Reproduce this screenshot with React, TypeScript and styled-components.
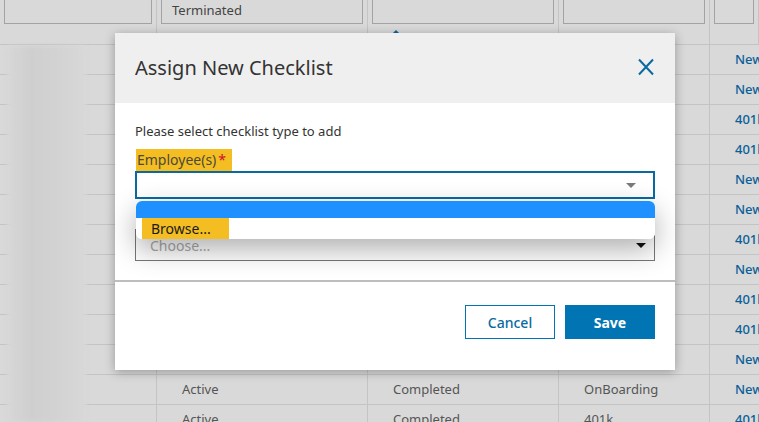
import React from "react";
import styled, { createGlobalStyle } from "styled-components";

const GlobalStyle = createGlobalStyle`
  html, body { margin: 0; padding: 0; }
  body {
    font-family: "Noto Sans", "Open Sans", Arial, sans-serif;
    background: #d9d9d9;
    overflow: hidden;
  }
  * { box-sizing: border-box; }
`;

const Page = styled.div`
  position: relative;
  width: 759px;
  height: 422px;
  overflow: hidden;
  background: #d9d9d9;
`;

const Grid = styled.div`
  display: grid;
  grid-template-columns: 157px 211px 191px 151px 1fr;
  grid-auto-rows: 30px;
  grid-template-rows: 45px;
`;

const HeadCell = styled.div`
  border-right: 1px solid #c4c4c4;
  border-bottom: 1px solid #c4c4c4;
  padding: 0 4px;
  position: relative;
  &:last-child { border-right: none; }
`;

const FilterBox = styled.div`
  height: 24px;
  border: 1px solid #a3a3a3;
  border-top: none;
  padding: 0 10px 4px 10px;
  font-size: 13px;
  line-height: 18px;
  color: #444;
  display: flex;
  align-items: center;
`;

const SortMark = styled.span`
  position: absolute;
  left: 24px;
  bottom: 10px;
  width: 0;
  height: 0;
  border-left: 4px solid transparent;
  border-right: 4px solid transparent;
  border-bottom: 4px solid #0a65a0;
`;

const Cell = styled.div<{ $link?: boolean }>`
  border-right: 1px solid #c4c4c4;
  border-bottom: 1px solid #c4c4c4;
  padding: 0 0 2px 25px;
  display: flex;
  align-items: center;
  font-size: 13px;
  white-space: nowrap;
  overflow: hidden;
  color: ${(p) => (p.$link ? "#0b5f98" : "#555")};
  font-weight: ${(p) => (p.$link ? 500 : 400)};
  &:nth-child(5n) { border-right: none; }
`;

const Redaction = styled.div`
  position: absolute;
  left: 7px;
  top: 46px;
  width: 79px;
  bottom: 0;
  background: linear-gradient(90deg, #d7d7d7 0%, #cfcfcf 30%, #d2d2d2 60%, #d8d8d8 100%);
  filter: blur(2px);
`;

const Modal = styled.div`
  position: absolute;
  left: 115px;
  top: 33px;
  width: 560px;
  height: 337px;
  background: #fff;
  box-shadow: 0 2px 10px rgba(0, 0, 0, 0.3);
  display: flex;
  flex-direction: column;
`;

const ModalHeader = styled.div`
  height: 70px;
  background: #efefef;
  padding: 0 20px 2px 20px;
  display: flex;
  align-items: center;
  justify-content: space-between;
`;

const Title = styled.h2`
  margin: 0;
  font-size: 20px;
  font-weight: 400;
  color: #333;
`;

const CloseButton = styled.button`
  border: none;
  background: none;
  padding: 0;
  width: 18px;
  height: 18px;
  display: flex;
  cursor: pointer;
`;

const ModalBody = styled.div`
  position: relative;
  padding: 19px 20px 0 20px;
  height: 177px;
  display: flex;
  flex-direction: column;
`;

const Intro = styled.p`
  margin: 0;
  font-size: 13px;
  line-height: 18px;
  color: #333;
`;

const Label = styled.label`
  align-self: flex-start;
  margin-top: 9px;
  margin-left: 1px;
  height: 22px;
  padding: 0 6px 0 1px;
  font-size: 14px;
  line-height: 21px;
  color: #4a4a3a;
  background: #f4be22;
`;

const Required = styled.span`
  color: #c8102e;
  margin-left: 2px;
`;

const Select = styled.div<{ $focused?: boolean }>`
  height: ${(p) => (p.$focused ? "28px" : "32px")};
  margin-top: ${(p) => (p.$focused ? "0" : "30px")};
  border: ${(p) => (p.$focused ? "2px solid #0a6aa0" : "1px solid #777")};
  background: #fff;
  display: flex;
  align-items: center;
  justify-content: space-between;
  padding: 0 8px 0 14px;
  font-size: 14px;
  color: #aaa;
`;

const Caret = styled.span<{ $dark?: boolean }>`
  width: 0;
  height: 0;
  border-left: 5px solid transparent;
  border-right: 5px solid transparent;
  border-top: 5px solid ${(p) => (p.$dark ? "#111" : "#7a7a7a")};
  margin-right: ${(p) => (p.$dark ? "0px" : "9px")};
`;

const Dropdown = styled.ul`
  position: absolute;
  left: 21px;
  top: 98px;
  width: 519px;
  margin: 0;
  padding: 0;
  list-style: none;
  background: #fff;
  border-radius: 6px;
  overflow: hidden;
  box-shadow: 0 10px 28px rgba(0, 0, 0, 0.32);
`;

const Option = styled.li<{ $active?: boolean }>`
  height: ${(p) => (p.$active ? "17px" : "21px")};
  background: ${(p) => (p.$active ? "#1e90ff" : "#fff")};
  padding-left: 6px;
  display: flex;
  align-items: stretch;
`;

const OptionText = styled.span`
  background: #f4be22;
  padding: 0 18px 0 9px;
  font-size: 14px;
  line-height: 21px;
  color: #1a1a1a;
`;

const ModalFooter = styled.div`
  flex: 1;
  border-top: 2px solid #bdbdbd;
  padding: 23px 20px 0 20px;
  display: flex;
  justify-content: flex-end;
  align-items: flex-start;
  gap: 10px;
`;

const Button = styled.button<{ $primary?: boolean }>`
  width: 90px;
  height: 34px;
  font-family: inherit;
  font-size: 14px;
  font-weight: ${(p) => (p.$primary ? 700 : 500)};
  border: 1px solid #0175b4;
  background: ${(p) => (p.$primary ? "#0175b4" : "#fff")};
  color: ${(p) => (p.$primary ? "#fff" : "#0a6aa0")};
  cursor: pointer;
`;

type Row = [string, string, string, string];

const rows: Row[] = [
  ["Active", "Completed", "OnBoarding", "New"],
  ["Active", "Completed", "OnBoarding", "New"],
  ["Active", "Completed", "401k", "401k"],
  ["Active", "Completed", "401k", "401k"],
  ["Active", "Completed", "OnBoarding", "New"],
  ["Active", "Completed", "OnBoarding", "New"],
  ["Active", "Completed", "401k", "401k"],
  ["Active", "Completed", "OnBoarding", "New"],
  ["Active", "Completed", "401k", "401k"],
  ["Active", "Completed", "401k", "401k"],
  ["Active", "Completed", "OnBoarding", "New"],
  ["Active", "Completed", "OnBoarding", "New"],
  ["Active", "Completed", "401k", "401k"],
];

export default function App() {
  return (
    <Page>
      <GlobalStyle />
      <Grid>
        <HeadCell>
          <FilterBox />
        </HeadCell>
        <HeadCell>
          <FilterBox>Terminated</FilterBox>
        </HeadCell>
        <HeadCell>
          <FilterBox />
          <SortMark />
        </HeadCell>
        <HeadCell>
          <FilterBox />
        </HeadCell>
        <HeadCell>
          <FilterBox />
        </HeadCell>
        {rows.map((r, i) => (
          <React.Fragment key={i}>
            <Cell />
            <Cell>{r[0]}</Cell>
            <Cell>{r[1]}</Cell>
            <Cell>{r[2]}</Cell>
            <Cell $link>{r[3]}</Cell>
          </React.Fragment>
        ))}
      </Grid>
      <Redaction />

      <Modal role="dialog" aria-label="Assign New Checklist">
        <ModalHeader>
          <Title>Assign New Checklist</Title>
          <CloseButton aria-label="Close">
            <svg width="18" height="18" viewBox="0 0 18 18">
              <path d="M2 1.5 L16 16.5 M16 1.5 L2 16.5" stroke="#0a6aa0" strokeWidth="2" fill="none" />
            </svg>
          </CloseButton>
        </ModalHeader>
        <ModalBody>
          <Intro>Please select checklist type to add</Intro>
          <Label>
            Employee(s)<Required>*</Required>
          </Label>
          <Select $focused>
            <span />
            <Caret />
          </Select>
          <Select>
            <span>Choose...</span>
            <Caret $dark />
          </Select>
          <Dropdown>
            <Option $active />
            <Option>
              <OptionText>Browse...</OptionText>
            </Option>
          </Dropdown>
        </ModalBody>
        <ModalFooter>
          <Button>Cancel</Button>
          <Button $primary>Save</Button>
        </ModalFooter>
      </Modal>
    </Page>
  );
}
